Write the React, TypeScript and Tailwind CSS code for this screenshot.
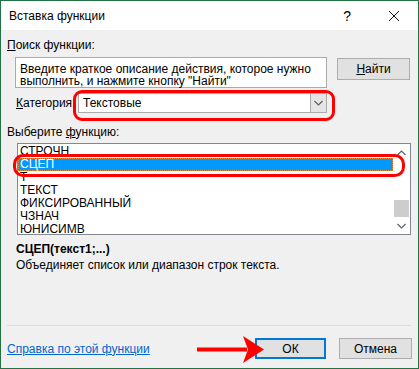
import React from "react";

const font = { fontFamily: '"Liberation Sans", Arial, sans-serif' };

function Chevron({ up }: { up?: boolean }) {
  return (
    <svg width="9" height="6" viewBox="0 0 9 6" className="block">
      {up ? (
        <path d="M0.5 5 L4.5 1 L8.5 5" fill="none" stroke="#606060" strokeWidth="1.2" />
      ) : (
        <path d="M0.5 1 L4.5 5 L8.5 1" fill="none" stroke="#606060" strokeWidth="1.2" />
      )}
    </svg>
  );
}

export default function App() {
  const rows = ["СТРОЧН", "СЦЕП", "Т", "ТЕКСТ", "ФИКСИРОВАННЫЙ", "ЧЗНАЧ", "ЮНИСИМВ"];
  return (
    <div
      className="relative w-[419px] h-[369px] border border-[#217346] bg-[#f0f0f0] flex flex-col text-[12px] text-black overflow-hidden"
      style={font}
    >
      {/* Title bar */}
      <div className="h-[29px] bg-white flex items-center pl-[8px] shrink-0">
        <span className="text-[12px] leading-[16px]">Вставка функции</span>
        <span className="ml-auto text-[14px] leading-[16px] mr-[37px]">?</span>
        <svg width="12" height="12" viewBox="0 0 12 12" className="mr-[18px]">
          <path d="M1 1 L11 11 M11 1 L1 11" stroke="#111" strokeWidth="1" />
        </svg>
      </div>

      {/* Body */}
      <div className="flex flex-col px-[6px] pt-[7px]">
        <div className="leading-[16px]">
          <span className="underline">П</span>оиск функции:
        </div>

        <div className="flex items-start mt-[4px] pl-[8px]">
          <div className="w-[312px] h-[31px] bg-white border border-[#ababab] px-[4px] pt-[5px] leading-[12px]">
            Введите краткое описание действия, которое нужно выполнить, и нажмите кнопку "Найти"
          </div>
          <div className="ml-[10px] mt-[1px] w-[73px] h-[22px] bg-[#e1e1e1] border border-[#adadad] flex items-center justify-center leading-[16px]">
            <span><span className="underline">Н</span>айти</span>
          </div>
        </div>

        <div className="flex items-center mt-[5px] pl-[9px]">
          <span className="leading-[16px] w-[62px]">
            <span className="underline">К</span>атегория:
          </span>
          <div className="w-[249px] h-[20px] bg-white border border-[#ababab] flex items-center">
            <span className="pl-[4px] leading-[16px]">Текстовые</span>
            <div className="ml-auto w-[16px] h-full bg-[#e5e5e5] border-l border-[#ababab] flex items-center justify-center">
              <Chevron />
            </div>
          </div>
        </div>

        <div className="leading-[16px] mt-[11px]">
          Выберите <span className="underline">ф</span>ункцию:
        </div>

        <div className="ml-[10px] mt-[3px] w-[394px] h-[92px] bg-white border border-[#828790] flex overflow-hidden">
          <div className="flex-1 flex flex-col pt-[1px]">
            {rows.map((r) => (
              <div
                key={r}
                className={
                  r === "СЦЕП"
                    ? "h-[13px] leading-[13px] pl-[2px] bg-[#0099ff] text-white outline outline-1 outline-dotted outline-[#e08a3c] -outline-offset-1"
                    : "h-[13px] leading-[13px] pl-[2px]"
                }
              >
                {r}
              </div>
            ))}
          </div>
          <div className="w-[17px] flex flex-col items-center bg-white">
            <div className="h-[17px] flex items-center justify-center">
              <Chevron up />
            </div>
            <div className="flex-1 w-full flex flex-col justify-end">
              <div className="mx-[1px] h-[17px] bg-[#cdcdcd] mb-[0px]" />
            </div>
            <div className="h-[17px] flex items-center justify-center">
              <Chevron />
            </div>
          </div>
        </div>

        <div className="pl-[9px] mt-[6px] font-bold leading-[16px]">СЦЕП(текст1;...)</div>
        <div className="pl-[9px] leading-[16px]">Объединяет список или диапазон строк текста.</div>

        <div className="mt-[52px] h-px bg-[#dadada] mr-[1px]" />

        <div className="flex items-center mt-[12px]">
          <span className="text-[#0066cc] underline leading-[16px]">Справка по этой функции</span>
          <div className="ml-auto w-[71px] h-[21px] bg-[#e1e1e1] border-2 border-[#0078d7] flex items-center justify-center leading-[16px]">
            ОК
          </div>
          <div className="ml-[13px] w-[73px] h-[21px] bg-[#e1e1e1] border border-[#adadad] flex items-center justify-center leading-[16px]">
            Отмена
          </div>
        </div>
      </div>

      {/* Red highlight frames */}
      <div className="absolute left-[72px] top-[89px] w-[262px] h-[31px] border-[3px] border-[#ff0000] rounded-[9px] pointer-events-none" />
      <div className="absolute left-[12px] top-[153px] w-[392px] h-[23px] border-[3px] border-[#ff0000] rounded-[10px] pointer-events-none" />

      {/* Red arrow */}
      <svg className="absolute left-[196px] top-[335px] pointer-events-none" width="68" height="27" viewBox="0 0 68 27">
        <rect x="0" y="11.5" width="50" height="4" fill="#ff0000" />
        <polygon points="46,0 67,13.5 46,27 51,13.5" fill="#ff0000" />
      </svg>
    </div>
  );
}
